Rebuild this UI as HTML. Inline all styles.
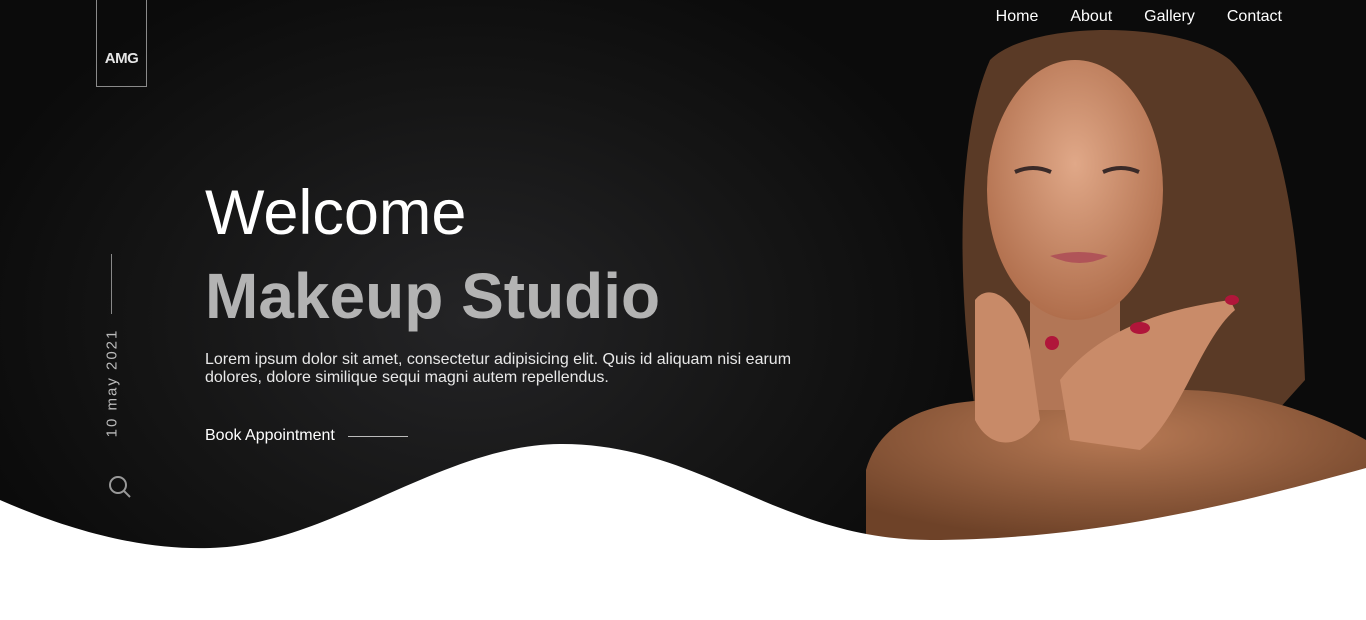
<!DOCTYPE html>
<html><head><style>
html,body{margin:0;padding:0;}
body{width:1366px;height:620px;position:relative;overflow:hidden;background:#fff;font-family:"Liberation Sans",Arial,sans-serif;}
.bg{position:absolute;left:0;top:0;width:1366px;height:560px;background:radial-gradient(ellipse 520px 380px at 470px 320px,#242426 0%,#151515 60%,#0b0b0b 100%);}
.logo{position:absolute;left:96px;top:-2px;width:51px;height:89px;border:1px solid #8a8a8a;border-top:none;color:#e6e6e6;font-weight:bold;font-size:15px;text-align:center;box-sizing:border-box;padding-top:52px;letter-spacing:-0.5px}
nav{position:absolute;top:8px;right:84px;}
nav a{color:#fff;text-decoration:none;font-size:16px;margin-left:32px;}
h1{position:absolute;left:205px;top:177px;margin:0;font-weight:normal;color:#fff;font-size:63px;}
h2{position:absolute;left:205px;top:259px;margin:0;font-weight:bold;color:#b3b3b3;font-size:64px;}
p{position:absolute;left:205px;top:351px;margin:0;color:#e8e8e8;font-size:16px;line-height:18px;width:600px;}
.book{position:absolute;left:205px;top:427px;color:#fff;font-size:16px;}
.book:after{content:"";position:absolute;left:143px;top:9px;width:60px;height:1px;background:#bbb;}
.vline{position:absolute;left:111px;top:254px;width:1px;height:60px;background:#888;}
.date{position:absolute;left:112px;top:383px;transform:translate(-50%,-50%) rotate(-90deg);color:#bbb;font-size:15px;letter-spacing:2px;white-space:nowrap;}
</style></head><body>
<div class="bg"></div>
<svg style="position:absolute;left:0;top:0" width="1366" height="620">
<defs>
<radialGradient id="sk" cx="0.5" cy="0.4" r="0.6"><stop offset="0" stop-color="#e0a888"/><stop offset="1" stop-color="#b06e4c"/></radialGradient>
<radialGradient id="sh" cx="0.5" cy="0.3" r="0.7"><stop offset="0" stop-color="#b87a55"/><stop offset="1" stop-color="#6e4228"/></radialGradient>
</defs>
<path d="M990 60 C1030 20 1180 20 1230 60 C1290 120 1300 260 1305 380 L1260 430 L980 440 C960 330 950 150 990 60Z" fill="#5a3a26"/>
<path d="M866 540 L866 470 C880 420 930 400 1000 400 L1180 390 C1260 390 1330 420 1366 440 L1366 540Z" fill="url(#sh)"/>
<rect x="1030" y="260" width="90" height="150" fill="#b27656"/>
<ellipse cx="1075" cy="190" rx="88" ry="130" fill="url(#sk)"/>
<path d="M975 300 C990 280 1020 300 1030 350 L1040 420 C1020 450 990 450 975 420Z" fill="#c88a68"/>
<path d="M1060 380 C1100 330 1160 310 1230 300 L1235 310 C1200 340 1180 420 1140 450 L1070 440Z" fill="#c98b69"/>
<ellipse cx="1140" cy="328" rx="10" ry="6" fill="#b0163a"/>
<ellipse cx="1232" cy="300" rx="7" ry="5" fill="#b0163a"/>
<ellipse cx="1052" cy="343" rx="7" ry="7" fill="#b0163a"/>
<path d="M1015 172 q18 -8 36 0" stroke="#3a2a28" stroke-width="4" fill="none"/>
<path d="M1103 172 q18 -8 36 0" stroke="#3a2a28" stroke-width="4" fill="none"/>
<path d="M1050 256 q28 -8 58 0 q-28 14 -58 0Z" fill="#b05458"/>
<path d="M0 500 C80 535 150 550 210 548 C330 545 440 445 560 444 C700 443 780 540 930 540 C1100 540 1250 500 1366 468 L1366 620 L0 620Z" fill="#fff"/>
<circle cx="118" cy="485" r="8" stroke="#999" stroke-width="2" fill="none"/>
<line x1="124" y1="491" x2="130" y2="497" stroke="#999" stroke-width="2"/>
</svg>
<div class="logo">AMG</div>
<nav><a>Home</a><a>About</a><a>Gallery</a><a>Contact</a></nav>
<h1>Welcome</h1>
<h2>Makeup Studio</h2>
<p>Lorem ipsum dolor sit amet, consectetur adipisicing elit. Quis id aliquam nisi earum dolores, dolore similique sequi magni autem repellendus.</p>
<div class="book">Book Appointment</div>
<div class="vline"></div>
<div class="date">10 may 2021</div>
</body></html>
